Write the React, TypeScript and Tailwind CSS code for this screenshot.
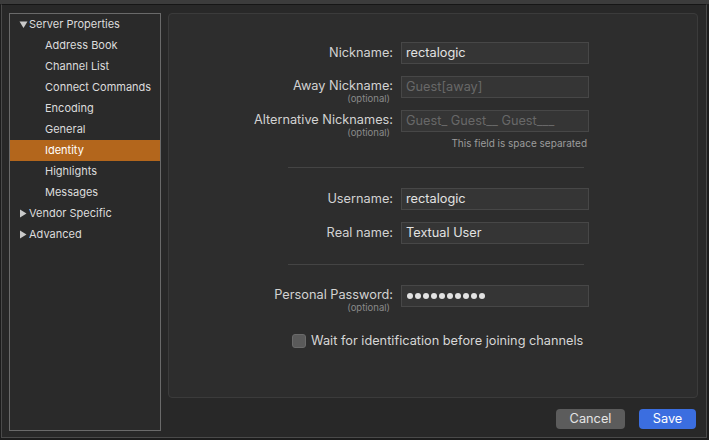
const sidebarItems = [
  { label: "Server Properties", kind: "open" },
  { label: "Address Book", kind: "child" },
  { label: "Channel List", kind: "child" },
  { label: "Connect Commands", kind: "child" },
  { label: "Encoding", kind: "child" },
  { label: "General", kind: "child" },
  { label: "Identity", kind: "child", selected: true },
  { label: "Highlights", kind: "child" },
  { label: "Messages", kind: "child" },
  { label: "Vendor Specific", kind: "closed" },
  { label: "Advanced", kind: "closed" },
];

function Disclosure({ open }: { open: boolean }) {
  return (
    <svg width="9" height="9" viewBox="0 0 9 9" className="shrink-0">
      {open ? <path d="M0.5 1.5h8L4.5 8z" fill="#c9c9c9" /> : <path d="M1 0.5v8l6.5-4z" fill="#c9c9c9" />}
    </svg>
  );
}

function Sidebar() {
  return (
    <div className="w-[152px] shrink-0 border border-[#6a6a6a] bg-[#2a2a2a]">
      {sidebarItems.map((item) => (
        <div
          key={item.label}
          className={`flex h-[21px] items-center text-[11px] text-[#dcdcdc] ${
            item.kind === "child" ? "pl-[35px]" : "gap-[1px] pl-[9px]"
          } ${item.selected ? "bg-[#b3661c] text-white" : ""}`}
        >
          {item.kind !== "child" && <Disclosure open={item.kind === "open"} />}
          <span>{item.label}</span>
        </div>
      ))}
    </div>
  );
}

function Label({ text, optional }: { text: string; optional?: boolean }) {
  return (
    <div className="flex h-[22px] w-[224px] shrink-0 flex-col items-end">
      <span className={`text-[12.75px] text-[#d2d2d2] ${optional ? "leading-[20px]" : "leading-[22px]"}`}>
        {text}
      </span>
      {optional && (
        <span className="-mt-[2px] pr-[3px] text-[9.5px] leading-[10px] text-[#8a8a8a]">(optional)</span>
      )}
    </div>
  );
}

function Field({
  label,
  value,
  placeholder,
  optional,
  className = "",
}: {
  label: string;
  value?: string;
  placeholder?: string;
  optional?: boolean;
  className?: string;
}) {
  return (
    <div className={`flex items-start gap-[8px] ${className}`}>
      <Label text={label} optional={optional} />
      <div className="flex h-[22px] w-[188px] items-center border border-[#474747] bg-[#353535] pl-[4px] text-[12.75px]">
        {value ? (
          <span className="text-[#e2e2e2]">{value}</span>
        ) : (
          <span className="text-[#686868]">{placeholder}</span>
        )}
      </div>
    </div>
  );
}

function Separator({ className = "" }: { className?: string }) {
  return <div className={`ml-[119px] h-px w-[296px] bg-[#444444] ${className}`} />;
}

export default function App() {
  return (
    <div className="flex h-[440px] w-[709px] flex-col bg-[#1c1c1c] font-[Inter,sans-serif]">
      <div className="h-[4px] bg-[#3c3c3c]" />
      <div className="mb-[2px] ml-[1px] mr-[2px] flex flex-1 gap-[7px] border-x border-b border-t border-x-[#4a4a4a] border-b-[#4a4a4a] border-t-[#161616] bg-[#282828] pb-[6px] pl-[7px] pr-[8px] pt-[8px]">
        <Sidebar />
        <div className="flex flex-1 flex-col">
          <div className="h-[385px] rounded-[4px] border border-[#3b3b3b] bg-[#2d2d2d] pt-[28px]">
            <Field label="Nickname:" value="rectalogic" />
            <Field label="Away Nickname:" placeholder="Guest[away]" optional className="mt-[12px]" />
            <Field
              label="Alternative Nicknames:"
              placeholder="Guest_ Guest__ Guest___"
              optional
              className="mt-[12px]"
            />
            <div className="mt-[5px] flex w-[419px] justify-end pr-[1px] text-[10px] leading-[12px] text-[#9c9c9c]">
              This field is space separated
            </div>
            <Separator className="mt-[18px]" />
            <Field label="Username:" value="rectalogic" className="mt-[20px]" />
            <Field label="Real name:" value="Textual User" className="mt-[12px]" />
            <Separator className="mt-[20px]" />
            <div className="mt-[20px] flex items-start gap-[8px]">
              <Label text="Personal Password:" optional />
              <div className="flex h-[22px] w-[188px] items-center gap-[2px] border border-[#474747] bg-[#353535] pl-[5px]">
                {Array.from({ length: 10 }).map((_, i) => (
                  <div key={i} className="h-[6px] w-[6px] rounded-full bg-[#e2e2e2]" />
                ))}
              </div>
            </div>
            <div className="ml-[123px] mt-[27px] flex items-center gap-[5px]">
              <div className="h-[14px] w-[14px] rounded-[3px] border border-[#6a6a6a] bg-[#5a5a5a]" />
              <span className="text-[12.75px] leading-[14px] text-[#d6d6d6]">
                Wait for identification before joining channels
              </span>
            </div>
          </div>
          <div className="mt-[11px] flex justify-end gap-[14px] pr-[2px]">
            <button className="h-[20px] w-[69px] rounded-[4px] bg-[#5c5c5c] text-[12.75px] text-[#e4e4e4]">
              Cancel
            </button>
            <button className="h-[20px] w-[57px] rounded-[4px] bg-[#3b6ee0] text-[12.75px] text-white">
              Save
            </button>
          </div>
        </div>
      </div>
    </div>
  );
}
